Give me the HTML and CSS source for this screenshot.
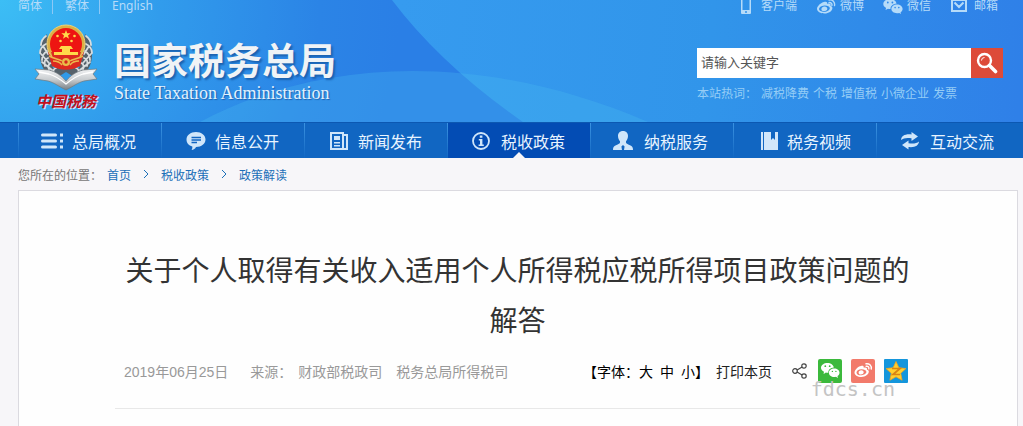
FILE: index.html
```
<!DOCTYPE html>
<html lang="zh-CN">
<head>
    <meta charset="UTF-8">
    <meta name="viewport" content="width=device-width, initial-scale=1.0">
    <title>国家税务总局</title>
    <link rel="stylesheet" href="styles.css">
</head>
<body>
    <header class="header">
        <svg class="header-bg" viewBox="0 0 1023 122" preserveAspectRatio="none" aria-hidden="true">
            <defs>
                <radialGradient id="bgLeft" gradientUnits="userSpaceOnUse" cx="0" cy="0" r="400">
                    <stop offset="0" stop-color="#3cbef5"/>
                    <stop offset="0.4" stop-color="#319cec"/>
                    <stop offset="0.8" stop-color="#2b84e6"/>
                    <stop offset="1" stop-color="#2a7fe6"/>
                </radialGradient>
                <linearGradient id="bgRight" gradientUnits="userSpaceOnUse" x1="400" y1="0" x2="1023" y2="60">
                    <stop offset="0" stop-color="#369bef"/>
                    <stop offset="0.5" stop-color="#3195ea"/>
                    <stop offset="1" stop-color="#2f80e8"/>
                </linearGradient>
            </defs>
            <rect width="1023" height="122" fill="url(#bgRight)"/>
            <path d="M0 0H392Q441 65 523 122H0Z" fill="url(#bgLeft)"/>
            <path d="M200 122C320 58 480 50 648 122Z" fill="#4cc0f0" fill-opacity="0.28"/>
        </svg>
        <div class="topbar">
            <div class="langs">
                <a href="#">简体</a>
                <a href="#">繁体</a>
                <a href="#">English</a>
            </div>
            <div class="tools">
                <a href="#">
                    <svg width="20" height="16" viewBox="0 0 20 16"><path fill="currentColor" fill-rule="evenodd" d="M5 0h8a1 1 0 0 1 1 1v13a1 1 0 0 1-1 1H5a1 1 0 0 1-1-1V1a1 1 0 0 1 1-1zm.5 1v10h7V1zM8 12.300v1.400h2v-1.400z"/></svg>
                    客户端
                </a>
                <a href="#">
                    <svg width="20" height="16" viewBox="0 0 20 16"><path fill="currentColor" fill-rule="evenodd" d="M8 3c2-.8 3.600-.2 3.200 1.900 2.200-.8 4.200 0 3.300 1.900 1.400.5 2 1.300 1.900 2.400C16.200 12 12.600 14.500 8.600 14.500S1 12.700 1 9.800C1 7.300 5 3.400 8 3zM8.300 6.400C5 6.600 2.900 8.300 3 10.100c.1 1.800 2.500 3 5.500 2.800s5.500-2 5.300-3.800-2.500-2.900-5.500-2.700zM8.500 7.500c1.800 0 3 1.100 2.800 2.500-.2 1.300-1.600 2.200-3.200 2.200s-2.900-1-2.700-2.300c.2-1.300 1.500-2.400 3.100-2.400z"/><path fill="none" stroke="currentColor" stroke-width="1.400" stroke-linecap="round" d="M13 1c3.500-.6 6.200 2 5.500 5.500M13 3.600c2-.3 3.300.9 2.900 2.800"/></svg>
                    微博
                </a>
                <a href="#">
                    <svg width="20" height="16" viewBox="0 0 20 16"><path fill="currentColor" fill-rule="evenodd" d="M7 0c3.500 0 6.200 2 6.500 4.700C10 4.700 7.300 7 7.500 10c-.9.1-1.700 0-2.500-.2L2.500 11l.6-2.100C1.300 7.900.3 6.600.3 5 .3 2.200 3.300 0 7 0zM4.800 2.600a.9.9 0 1 0 0 1.800.9.9 0 0 0 0-1.800zm4.600 0a.9.9 0 1 0 0 1.800.9.9 0 0 0 0-1.800z"/><path fill="currentColor" fill-rule="evenodd" d="M14 5.600c3.200 0 5.600 2 5.600 4.400 0 1.400-.8 2.500-2 3.300l.4 1.600-1.800-1c-.7.200-1.400.3-2.200.3-3.200 0-5.600-1.900-5.600-4.200s2.400-4.400 5.600-4.400zm-1.900 2.200a.8.8 0 1 0 0 1.600.8.8 0 0 0 0-1.600zm3.700 0a.8.8 0 1 0 0 1.600.8.8 0 0 0 0-1.600z"/></svg>
                    微信
                </a>
                <a href="#">
                    <svg width="20" height="16" viewBox="0 0 20 16"><path fill="none" stroke="currentColor" stroke-width="2" d="M2 1h14v11H2zM4.500 3.500L9 8l4.500-4.500"/></svg>
                    邮箱
                </a>
            </div>
        </div>
        <div class="banner">
            <div class="emblem">
                <svg width="66" height="68" viewBox="0 0 66 68" aria-hidden="true">
                    <defs>
                        <linearGradient id="silver" x1="0" y1="0" x2="0" y2="1">
                            <stop offset="0" stop-color="#f4f5f6"/>
                            <stop offset="0.5" stop-color="#c9cdd0"/>
                            <stop offset="1" stop-color="#767e84"/>
                        </linearGradient>
                    </defs>
                    <path d="M14 10C5 18 3 42 17 52l16 7 16-7c14-10 12-34 3-42l-6 34H20z" fill="#56626b"/>
                    <g fill="none" stroke="#d9dddf" stroke-width="1.800" stroke-linecap="round">
                        <path d="M13 12c-4 3-5 6-5 9M13 20c-4 2-6 5-6 9M14 27c-3 2-5 5-5 9M15 34c-3 1-4 4-3 8M18 39c-3 1-3 4-2 7M23 44c-3 1-3 3-2 6M10 22l5 8M8 30l8 9M9 38l10 8"/>
                        <path d="M53 12c4 3 5 6 5 9M53 20c4 2 6 5 6 9M52 27c3 2 5 5 5 9M51 34c3 1 4 4 3 8M48 39c3 1 3 4 2 7M43 44c3 1 3 3 2 6M56 22l-5 8M58 30l-8 9M57 38l-10 8"/>
                    </g>
                    <path d="M33 48l8 5-8 7-8-7z" fill="#2f9ae8"/>
                    <path d="M15 28l4 14c8 5 20 5 28 0l4-14z" fill="#dc2a20"/>
                    <circle cx="33" cy="20" r="19" fill="#dcb145" stroke="#efd377" stroke-width="1"/>
                    <circle cx="33" cy="20" r="16" fill="#ee1512"/>
                    <path d="M18 28h30l-4 13c-7 4-15 4-22 0z" fill="#dc2a20"/>
                    <path d="M33 6l1.200 3.300h3.500L35 11.400l1 3.300-3-2-3 2 1-3.300-2.700-2.100h3.500z" fill="#ffd94a"/>
                    <g fill="#ffd94a">
                        <circle cx="24.500" cy="12" r="1.300"/><circle cx="41.500" cy="12" r="1.300"/>
                        <circle cx="27.500" cy="17" r="1.300"/><circle cx="38.500" cy="17" r="1.300"/>
                        <path d="M28 22h10l2 3h-3v3h8v3H21v-3h8v-3h-3z"/>
                    </g>
                    <path d="M16 32c5 3 10 3 13 5M50 32c-5 3-10 3-13 5M20 37c4 0 7 1 9 4M46 37c-4 0-7 1-9 4" fill="none" stroke="#ebba4c" stroke-width="1.500"/>
                    <circle cx="33" cy="38" r="4" fill="#e9bd49"/>
                    <circle cx="33" cy="38" r="1.700" fill="#d8241c"/>
                    <path d="M2 45l14 1c7 2 12 5 17 11 5-6 10-9 17-11l14-1-4 5 4 5-13 2c-7 2-10 5-18 9-8-4-11-7-18-9L2 55l4-5z" fill="url(#silver)" stroke="#70787e" stroke-width="0.700"/>
                    <path d="M6 48l10 2c7 2 11 5 17 10 6-5 10-8 17-10l10-2" fill="none" stroke="#fff" stroke-width="1.300"/>
                </svg>
                <span class="emblem-text">中国税務</span>
            </div>
            <div class="site-name">
                <div class="name-cn">国家税务总局</div>
                <div class="name-en">State Taxation Administration</div>
            </div>
            <div class="search">
                <form class="search-form">
                    <input type="text" class="search-input" placeholder="请输入关键字" aria-label="请输入关键字">
                    <button type="button" class="search-btn" aria-label="搜索">
                        <svg width="22" height="22" viewBox="0 0 22 22"><circle cx="8.500" cy="8.500" r="6.500" fill="none" stroke="#fff" stroke-width="2.400"/><path d="M5.500 8.500a3 3 0 0 1 3-3" fill="none" stroke="#fff" stroke-width="1"/><path d="M13.500 13.500l6 6" stroke="#fff" stroke-width="3.600" stroke-linecap="round"/></svg>
                    </button>
                </form>
                <div class="hotwords">
                    <span>本站热词：</span>
                    <a href="#">减税降费</a>
                    <a href="#">个税</a>
                    <a href="#">增值税</a>
                    <a href="#">小微企业</a>
                    <a href="#">发票</a>
                </div>
            </div>
        </div>
    </header>

    <nav class="nav">
        <ul class="nav-list">
            <li><a href="#">
                <svg width="24" height="20" viewBox="0 0 24 20"><path fill="none" stroke="currentColor" stroke-width="3" stroke-linecap="round" d="M2.500 4h13M2.500 10h13M2.500 16h13"/><path fill="currentColor" d="M20 2.500h3v3h-3zM20 8.500h3v3h-3zM20 14.500h3v3h-3z"/></svg>
                总局概况</a></li>
            <li><a href="#">
                <svg width="24" height="20" viewBox="0 0 24 20"><path fill="currentColor" d="M13 1c5.500 0 9.500 3.200 9.500 7.500S18.500 16 13 16c-.8 1.700-2.300 2.800-4.500 3 .8-1 1-2.300.8-3.500C5.700 14.500 3.500 12 3.500 8.500 3.500 4.200 7.500 1 13 1z"/><path d="M8.500 6.500h9.500M8.500 9h9.500M8.500 11.500h5.500" stroke="#1166c2" stroke-width="1.300"/></svg>
                信息公开</a></li>
            <li><a href="#">
                <svg width="24" height="20" viewBox="0 0 24 20"><path fill="none" stroke="currentColor" stroke-width="2" d="M5 2h12v16H5zM17 4h4v14h-4"/><path fill="currentColor" d="M8 5h6v4H8zM8 11h6v1.500H8zM8 14h6v1.500H8z"/></svg>
                新闻发布</a></li>
            <li class="active"><a href="#">
                <svg width="24" height="20" viewBox="0 0 24 20"><circle cx="12" cy="10" r="8" fill="none" stroke="currentColor" stroke-width="1.800"/><path fill="currentColor" d="M10.800 4.500h2.600v2.300h-2.600zM9.800 8h3.600v5.600h1.400V15H9.600v-1.400H11V9.400H9.800z"/></svg>
                税收政策</a></li>
            <li><a href="#">
                <svg width="24" height="20" viewBox="0 0 24 20"><path fill="currentColor" d="M11 0c3.300 0 5 2.200 5 5 0 2.300-.9 4-2 5.200v1.300c0 1 1.500 1.500 4 2.700 2.300 1 3 2.200 3 4.800h-9l.6-3.600L11 14l-1.600 1.400L10 19H1c0-2.600.7-3.800 3-4.800 2.500-1.200 4-1.700 4-2.700v-1.300C6.900 9 6 7.300 6 5c0-2.800 1.700-5 5-5z"/></svg>
                纳税服务</a></li>
            <li><a href="#">
                <svg width="24" height="20" viewBox="0 0 24 20"><path fill="currentColor" d="M6 1h2v18H6zM9 1h7v8l2-2 2 2V1h3v18H9z"/></svg>
                税务视频</a></li>
            <li><a href="#">
                <svg width="24" height="20" viewBox="0 0 24 20"><path fill="currentColor" d="M3 9c.3-4 4-6.200 10.500-5.500V1L20 5.500 13.500 10V7.200C8.500 6.500 5.500 7 3 9zM21 10.500c-.3 4-4 6.200-10.500 5.500v2.500L4 14l6.500-4.500v2.800c5 .7 8 .2 10.500-1.800z"/></svg>
                互动交流</a></li>
        </ul>
    </nav>

    <div class="crumbs">
        <span class="crumbs-label">您所在的位置：</span>
        <a href="#">首页</a>
        <svg width="6" height="10" viewBox="0 0 6 10"><path d="M1 1l4 4-4 4" fill="none" stroke="#1b6fb8"/></svg>
        <a href="#">税收政策</a>
        <svg width="6" height="10" viewBox="0 0 6 10"><path d="M1 1l4 4-4 4" fill="none" stroke="#1b6fb8"/></svg>
        <a href="#">政策解读</a>
    </div>

    <main class="article">
        <h1>关于个人取得有关收入适用个人所得税应税所得项目政策问题的解答</h1>
        <div class="meta">
            <span class="date">2019年06月25日</span>
            <span class="source">来源：</span>
            <span class="dept">财政部税政司</span>
            <span>税务总局所得税司</span>
            <div class="actions">
                <div class="font-size">【字体：<a href="#">大</a><a href="#">中</a><a href="#">小</a>】</div>
                <a class="print" href="#">打印本页</a>
                <div class="share">
                    <svg width="16" height="16" viewBox="0 0 16 16"><g fill="none" stroke="#444" stroke-width="1.200"><circle cx="3" cy="8" r="2.300"/><circle cx="12" cy="3" r="2.200"/><circle cx="12" cy="13" r="2.200"/><path d="M5.100 6.900l5-2.800M5.100 9.100l5 2.800"/></g></svg>
                    <a href="#" aria-label="微信">
                        <svg width="24" height="24" viewBox="0 0 24 24"><rect width="24" height="24" rx="2" fill="#3bb93c"/><path fill="#fff" fill-rule="evenodd" d="M9.500 4c3.300 0 5.900 1.900 6.300 4.500-3.200.1-5.600 2.300-5.500 5.200-.9.100-1.700 0-2.400-.2L5.500 15l.5-2.200C4.200 11.900 3 10.500 3 8.800 3 6.100 5.900 4 9.500 4zM7.300 6.300a.9.9 0 1 0 0 1.800.9.9 0 0 0 0-1.800zm4.400 0a.9.9 0 1 0 0 1.800.9.9 0 0 0 0-1.800z"/><path fill="#fff" fill-rule="evenodd" d="M16.200 9.500c3 0 5.300 1.900 5.300 4.200 0 1.400-.8 2.600-2 3.300l.4 1.900-2-1.100c-.5.100-1.100.2-1.700.2-3 0-5.300-1.900-5.300-4.300s2.300-4.200 5.300-4.200zm-1.800 2.200a.7.700 0 1 0 0 1.400.7.700 0 0 0 0-1.400zm3.500 0a.7.700 0 1 0 0 1.400.7.700 0 0 0 0-1.400z"/></svg>
                    </a>
                    <a href="#" aria-label="微博">
                        <svg width="24" height="24" viewBox="0 0 24 24"><rect width="24" height="24" rx="2" fill="#f27a6b"/><path fill="#fff" fill-rule="evenodd" d="M10 7c1.800-.6 3 0 2.700 1.700 2-.7 3.900 0 3.200 1.800 1.400.5 2 1.200 1.900 2.300-.2 2.700-3.400 5.200-7.400 5.200S3.500 16 3.500 13.400C3.500 11 7 7.500 10 7zm.4 3.200c-3 .1-5 1.700-4.900 3.500.1 1.700 2.300 2.800 5 2.600s5-1.800 4.900-3.500-2.300-2.700-5-2.600zm-.2 1c1.700 0 2.700 1 2.500 2.300-.2 1.200-1.400 2-2.800 2s-2.500-.9-2.300-2.100c.1-1.200 1.200-2.200 2.600-2.200z"/><path fill="none" stroke="#fff" stroke-width="1.400" stroke-linecap="round" d="M15 4.800c3.500-.5 5.900 2 5.200 5.200M15.200 7.300c1.900-.3 3 .8 2.600 2.500"/></svg>
                    </a>
                    <a href="#" aria-label="QQ空间">
                        <svg width="24" height="24" viewBox="0 0 24 24"><rect width="24" height="24" rx="1" fill="#1496dc"/><path fill="#ffcf2e" stroke="#f2a51d" stroke-width="0.800" stroke-linejoin="round" d="M12 2.500l2.900 6.300 7 .8-5.200 4.700 1.400 6.900L12 17.800l-6.100 3.400 1.400-6.900L2.100 9.600l7-.8z"/><path d="M8 9.500h8l-7 6h7" fill="none" stroke="#d98312" stroke-width="1.700"/></svg>
                    </a>
                    <span class="site-mark">fdcs.cn</span>
                </div>
            </div>
        </div>
    </main>
</body>
</html>
```
FILE: styles.css
```
* {
    box-sizing: border-box;
}
body {
    display: flex;
    flex-direction: column;
    min-height: 100vh;
    margin: 0;
    background: #f7f6f9;
    font-family: "Liberation Sans", "Noto Sans CJK SC", sans-serif;
    font-size: 12px;
    color: #333;
}
a {
    color: inherit;
    text-decoration: none;
}
svg {
    display: block;
    flex-shrink: 0;
}

/* header */
.header {
    position: relative;
    height: 122px;
    background: #3195ea;
    color: #b5dbf9;
}
.header-bg {
    position: absolute;
    top: 0;
    left: 0;
    width: 100%;
    height: 100%;
}
.topbar {
    position: relative;
    display: flex;
    justify-content: space-between;
    height: 14px;
    padding: 0 25px 0 18px;
    line-height: 12px;
}
.langs {
    display: flex;
    font-family: "Noto Sans", "Noto Sans CJK SC", sans-serif;
}
.langs a + a {
    margin-left: 10px;
    padding-left: 12px;
    border-left: 1px solid #8cc8f6;
}
.tools {
    display: flex;
    gap: 19px;
}
.tools a {
    display: flex;
    gap: 4px;
}
.tools svg {
    margin-top: -1px;
}
.banner {
    position: relative;
    display: flex;
    align-items: flex-start;
    padding: 0 20px 0 33px;
}
.emblem {
    display: flex;
    flex-direction: column;
    align-items: center;
    width: 66px;
    padding-top: 10px;
}
.emblem-text {
    font-size: 15px;
    font-weight: bold;
    font-style: italic;
    line-height: 20px;
    color: #c4101c;
    text-shadow: 1px 1px 0 #d5e6f5;
}
.site-name {
    padding: 27px 0 0 15px;
    white-space: nowrap;
}
.name-cn {
    font-size: 37px;
    font-weight: bold;
    line-height: 44px;
    color: #f0f3f6;
    text-shadow: 2px 2px 2px #1c62b0;
}
.name-en {
    font-family: "Liberation Serif", serif;
    font-size: 18px;
    line-height: 16px;
    color: #e2f1fd;
    text-shadow: 1px 1px 1px #1c62b0;
}
.search {
    width: 306px;
    margin-left: auto;
    padding-top: 34px;
}
.search-form {
    display: flex;
    height: 30px;
}
.search-input {
    flex: 1;
    min-width: 0;
    padding: 0 4px 2px;
    border: 0;
    background: #fff;
    font-family: inherit;
    font-size: 13px;
}
.search-input::placeholder {
    color: #555;
}
.search-btn {
    display: flex;
    align-items: center;
    justify-content: center;
    width: 32px;
    padding: 0;
    border: 0;
    background: #dd4b39;
}
.hotwords {
    display: flex;
    gap: 4px;
    padding-top: 8px;
    line-height: 16px;
    color: #95cdf6;
}

/* main menu */
.nav {
    height: 36px;
    padding: 0 4px 0 18px;
    border-top: 1px solid #0c58b2;
    background: #1166c2;
}
.nav-list {
    display: flex;
    margin: 0;
    padding: 0;
    list-style: none;
}
.nav-list li {
    position: relative;
    flex: 1;
    border-left: 1px solid;
    border-image: linear-gradient(#3c94e2, #1166c2) 1;
}
.nav-list a {
    display: flex;
    align-items: center;
    gap: 8px;
    height: 35px;
    padding-left: 21px;
    font-size: 16px;
    color: #e8f4ff;
    white-space: nowrap;
}
.nav-list svg {
    color: #d0e6fa;
}
.nav-list .active {
    background: #034cb4;
}
.active::after {
    content: "";
    position: absolute;
    bottom: 0;
    left: 50%;
    margin-left: -6px;
    border: 6px solid transparent;
    border-top: 0;
    border-bottom-color: #f7f6f9;
}

/* breadcrumbs */
.crumbs {
    display: flex;
    align-items: center;
    gap: 12px;
    height: 32px;
    padding-left: 18px;
    color: #1b6fb8;
}
.crumbs-label {
    margin-right: -7px;
    color: #777;
}

/* article */
.article {
    flex: 1;
    margin: 0 5px 0 18px;
    padding: 56px 97px 0 96px;
    border: 1px solid #dbdae0;
    border-bottom: 0;
    background: #fefefe;
}
h1 {
    margin: 0;
    font-size: 28px;
    font-weight: normal;
    line-height: 50px;
    text-align: center;
    color: #333;
}
.meta {
    display: flex;
    align-items: center;
    height: 62px;
    padding: 0 12px 14px 9px;
    border-bottom: 1px solid #e8e8e8;
    font-size: 14px;
    color: #999;
    white-space: nowrap;
}
.date {
    margin-right: 22px;
}
.source {
    margin-right: 6px;
}
.dept {
    margin-right: 14px;
}
.actions {
    display: flex;
    align-items: center;
    margin-left: auto;
    color: #222;
}
.font-size {
    color: #000;
}
.font-size a + a {
    margin-left: 7px;
}
.print {
    margin: 0 20px 0 7px;
}
.share {
    position: relative;
    display: flex;
    align-items: center;
    gap: 9px;
}
.share svg:first-child {
    margin-right: 1px;
}
.share a svg:first-child {
    margin-right: 0;
}
.site-mark {
    position: absolute;
    top: 18px;
    right: 13px;
    font-family: "DejaVu Sans Mono", monospace;
    font-size: 20px;
    line-height: 24px;
    color: #c4c4c4;
}
```
